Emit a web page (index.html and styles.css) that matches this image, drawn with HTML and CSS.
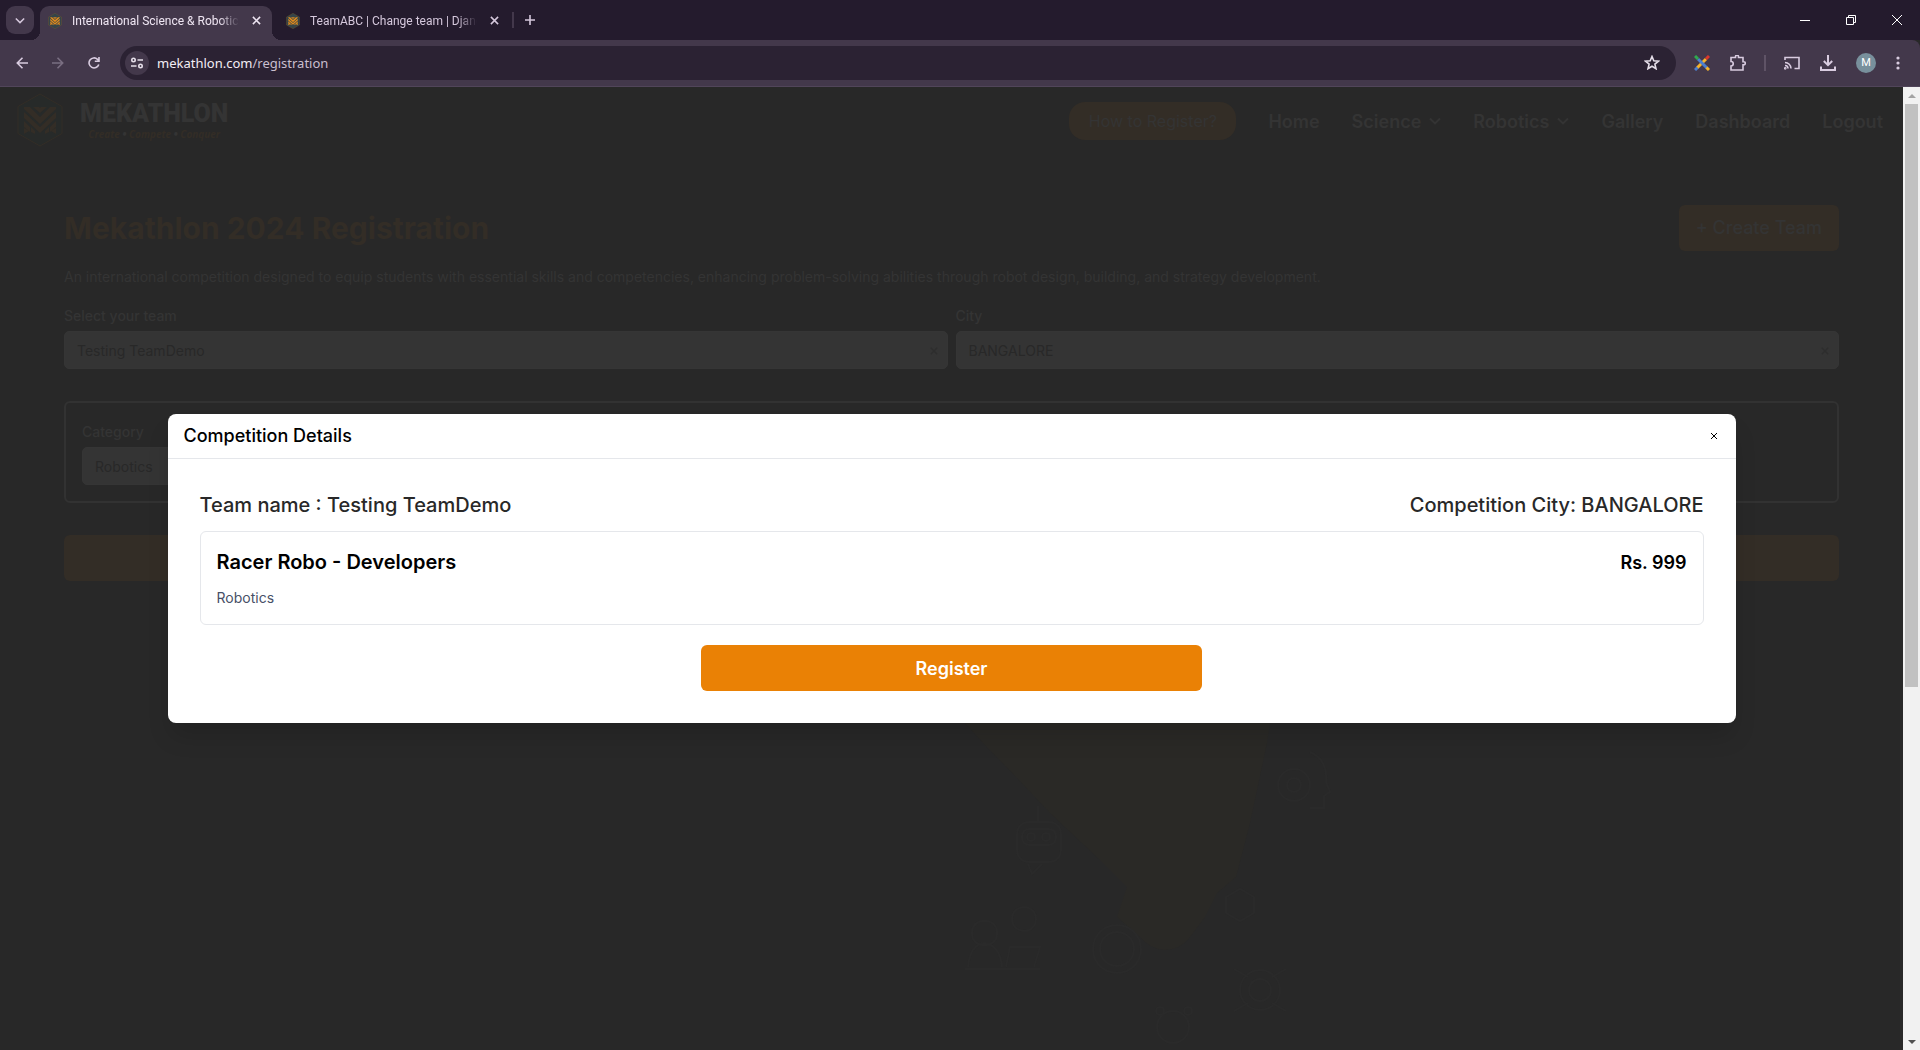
FILE: index.html
```html
<!DOCTYPE html>
<html lang="en">
<head>
    <meta charset="UTF-8">
    <meta name="viewport" content="width=device-width, initial-scale=1.0">
    <title>International Science &amp; Robotics Competition</title>
    <link rel="stylesheet" href="styles.css">
</head>
<body>

    <!-- shared shapes -->
    <svg class="defs" aria-hidden="true">
        <symbol id="logo" viewBox="0 0 46 54">
            <path class="hex" d="M23 1 45 13.500V40.500L23 53 1 40.500V13.500Z"/>
            <path class="mark" d="M7 14h6l10 10 10-10h6v2L23 31 7 16ZM16 14h6l1 1 1-1h6l-7 6ZM7 19l16 15 16-15v6L23 40 7 25ZM7 28l6 6v5l-6-5ZM39 28l-6 6v5l6-5ZM7 35l5 3-5 3ZM14 34l4 4v3l-4-2ZM39 35l-5 3 5 3ZM32 34l-4 4v3l4-2Z"/>
        </symbol>
        <symbol id="chevron" viewBox="0 0 12 8">
            <path d="M1 1.500 6 6.500 11 1.500" fill="none" stroke="currentColor" stroke-width="1.800"/>
        </symbol>
        <symbol id="cross" viewBox="0 0 10 10">
            <path d="M1 1l8 8M9 1 1 9" fill="none" stroke="currentColor" stroke-width="1.700"/>
        </symbol>
    </svg>

    <div class="tab-bar">
        <button class="tab-search" aria-label="Search tabs"><svg width="10" height="7"><use href="#chevron"/></svg></button>
        <div class="tab active">
            <svg class="favicon" width="14" height="16"><use href="#logo"/></svg>
            <span class="tab-title">International Science &amp; Robotic</span>
            <button class="tab-close" aria-label="Close tab"><svg width="9" height="9"><use href="#cross"/></svg></button>
        </div>
        <div class="tab">
            <svg class="favicon" width="14" height="16"><use href="#logo"/></svg>
            <span class="tab-title">TeamABC | Change team | Djang</span>
            <button class="tab-close" aria-label="Close tab"><svg width="9" height="9"><use href="#cross"/></svg></button>
        </div>
        <span class="tab-line"></span>
        <button class="new-tab" aria-label="New tab"><svg width="10" height="10" viewBox="0 0 10 10"><path d="M5 0v10M0 5h10" stroke="currentColor" stroke-width="1.600"/></svg></button>
        <div class="window-buttons">
            <button aria-label="Minimize"><svg width="10" height="10"><path d="M0 5.500h10" stroke="currentColor"/></svg></button>
            <button aria-label="Restore"><svg width="10" height="10" fill="none" stroke="currentColor"><path d="M.5 2.500h7v7h-7ZM2.500 2.500v-2h7v7h-2"/></svg></button>
            <button aria-label="Close"><svg width="10" height="10" stroke="currentColor"><path d="M0 0l10 10M10 0 0 10"/></svg></button>
        </div>
    </div>

    <div class="toolbar">
        <div class="nav-buttons">
            <button aria-label="Back"><svg width="12" height="12" viewBox="0 0 12 12"><path d="M12 6H1.500M6.500.8 1.300 6l5.200 5.200"/></svg></button>
            <button class="off" aria-label="Forward"><svg width="12" height="12" viewBox="0 0 12 12"><path d="M0 6h10.500M5.500.8 10.700 6l-5.200 5.200"/></svg></button>
            <button aria-label="Reload"><svg width="12" height="12" viewBox="0 0 12 12"><path d="M10.800 7.500A5 5 0 1 1 9.500 2.300L11 4M11 0v4.300H6.800"/></svg></button>
        </div>
        <div class="omnibox">
            <button class="site-info" aria-label="Site information"><svg width="12" height="12" viewBox="0 0 12 12"><circle cx="2.500" cy="3" r="1.700"/><path d="M6.500 3H12M0 9h5.500"/><circle cx="9.500" cy="9" r="1.700"/></svg></button>
            <a class="url" href="#">mekathlon.com<span>/registration</span></a>
            <button class="star" aria-label="Bookmark"><svg width="16" height="15" viewBox="0 0 16 15"><path d="M8 1.500l1.800 4.200 4.700.4-3.600 3 1.100 4.600L8 11.300l-4 2.400 1.100-4.600-3.600-3 4.700-.4Z"/></svg></button>
        </div>
        <div class="extensions">
            <button aria-label="Extension">
                <svg class="pens" width="16" height="16" viewBox="0 0 16 16">
                    <path stroke="#f5b32c" d="M12 4 3 13"/><path stroke="#4c7fd0" d="M4 4l9 9"/>
                    <path stroke="#2fa84f" d="M1 1l3 3"/><path stroke="#d9372c" d="M15 1l-3 3"/>
                    <path stroke="#4c7fd0" d="M3.500 12.500 1 15"/><path stroke="#f5b32c" d="M12.500 12.500 15 15"/>
                </svg>
            </button>
            <button aria-label="Extensions"><svg width="16" height="16" viewBox="0 0 16 16"><path d="M1 2.500h4.500V1.700a1.500 1.500 0 0 1 3 0v.8H13v4.300h.8a1.500 1.500 0 0 1 0 3H13V15H1v-4a2.200 2.200 0 0 0 0-4.500Z"/></svg></button>
            <span class="tool-line"></span>
            <button aria-label="Cast"><svg width="16" height="14" viewBox="0 0 16 14"><path d="M1 4V1.500h14v11h-4.500M1 6.500a6 6 0 0 1 6 6M1 9.500a3 3 0 0 1 3 3"/><circle cx="1.200" cy="12.300" r=".6"/></svg></button>
            <button aria-label="Downloads"><svg width="16" height="16" viewBox="0 0 16 16"><path class="thick" d="M8 0v10M3.800 6 8 10.200 12.200 6M1 11.500V15h14v-3.500"/></svg></button>
            <button class="avatar" aria-label="Profile">M</button>
            <button aria-label="Menu"><svg class="dots" width="4" height="14" viewBox="0 0 4 14"><circle cx="2" cy="2" r="1.600"/><circle cx="2" cy="7" r="1.600"/><circle cx="2" cy="12" r="1.600"/></svg></button>
        </div>
    </div>

    <div class="viewport">
        <div class="page">
            <!-- faint illustration behind the form -->
            <svg class="backdrop" viewBox="0 0 1903 963" preserveAspectRatio="xMidYMid slice" aria-hidden="true">
                <path class="beam" d="M965 636H1270L1267 656L1250 736L1236 790L1217 806L1205 830L1190 850Q1180 863 1165 863Q1150 862 1140 850L1117 830L1127 800L1100 773L1050 726L1017 691L983 656Z"/>
                <g class="doodles">
                    <rect x="1017" y="735" width="44" height="40" rx="12"/>
                    <rect x="1022" y="742" width="34" height="16" rx="7"/>
                    <circle cx="1031" cy="750" r="4"/><circle cx="1046" cy="750" r="4"/>
                    <path d="M1028 777l4 10 10-10M1038 735v-16M965 882h75M968 880q2-22 16-24 16 2 18 24M1006 880l4-20h30l-6 20"/>
                    <rect x="972" y="834" width="25" height="24" rx="11"/>
                    <circle cx="1024" cy="832" r="12"/>
                    <circle cx="1117" cy="862" r="24"/><circle cx="1117" cy="862" r="17"/>
                    <circle cx="1294" cy="698" r="16"/><circle cx="1294" cy="698" r="7"/>
                    <path d="M1310 665q18 8 16 30l4 10-6 4v12h-14M1226 810l14-8 14 8v16l-14 8-14-8Z"/>
                    <circle cx="1260" cy="903" r="11"/><circle cx="1260" cy="903" r="20"/>
                    <path d="M1234 882l14 8M1286 882l-14 8M1234 924l14-8M1286 924l-14-8"/>
                    <circle cx="1173" cy="940" r="16"/><circle cx="1160" cy="924" r="4"/><circle cx="1188" cy="924" r="4"/>
                </g>
            </svg>

            <header class="site-header">
                <a class="brand" href="#">
                    <svg class="brand-logo" width="46" height="54"><use href="#logo"/></svg>
                    <span class="brand-text">
                        <span class="brand-name">MEKATHLON</span>
                        <span class="tagline">Create <b>•</b> Compete <b>•</b> Conquer</span>
                    </span>
                </a>
                <nav class="menu">
                    <button class="how">How to Register?</button>
                    <a href="#">Home</a>
                    <a href="#">Science <svg width="12" height="8"><use href="#chevron"/></svg></a>
                    <a href="#">Robotics <svg width="12" height="8"><use href="#chevron"/></svg></a>
                    <a href="#">Gallery</a>
                    <a href="#">Dashboard</a>
                    <a href="#">Logout</a>
                </nav>
            </header>

            <main class="content">
                <div class="title-row">
                    <h1>Mekathlon 2024 Registration</h1>
                    <button class="create">+ Create Team</button>
                </div>
                <p class="intro">An international competition designed to equip students with essential skills and competencies, enhancing problem-solving abilities through robot design, building, and strategy development.</p>
                <div class="fields">
                    <div class="field">
                        <label for="team">Select your team</label>
                        <div class="select-box">
                            <select id="team"><option>Testing TeamDemo</option></select>
                            <button class="clear" aria-label="Clear team"><svg width="8" height="8"><use href="#cross"/></svg></button>
                        </div>
                    </div>
                    <div class="field">
                        <label for="city">City</label>
                        <div class="select-box">
                            <select id="city"><option>BANGALORE</option></select>
                            <button class="clear" aria-label="Clear city"><svg width="8" height="8"><use href="#cross"/></svg></button>
                        </div>
                    </div>
                </div>
                <div class="competition">
                    <div class="field">
                        <label for="category">Category</label>
                        <div class="select-box">
                            <select id="category"><option>Robotics</option></select>
                        </div>
                    </div>
                </div>
                <button class="submit" aria-label="Submit"></button>
            </main>

            <div class="overlay">
                <section class="modal" role="dialog" aria-labelledby="modal-title">
                    <div class="modal-header">
                        <h2 id="modal-title">Competition Details</h2>
                        <button class="modal-close" aria-label="Close"><svg width="8" height="8" viewBox="0 0 8 8"><path d="M1 1l6 6M7 1 1 7" stroke="currentColor"/></svg></button>
                    </div>
                    <div class="modal-body">
                        <div class="summary">
                            <span>Team name : Testing TeamDemo</span>
                            <span>Competition City: BANGALORE</span>
                        </div>
                        <div class="card">
                            <div class="card-row">
                                <h3>Racer Robo - Developers</h3>
                                <span class="price">Rs. 999</span>
                            </div>
                            <p>Robotics</p>
                        </div>
                        <button class="register">Register</button>
                    </div>
                </section>
            </div>
        </div>

        <div class="scrollbar" aria-hidden="true">
            <span class="arrow up"></span>
            <div class="track"><div class="thumb"></div></div>
            <span class="arrow down"></span>
        </div>
    </div>

</body>
</html>
```

FILE: styles.css
```css
* {
    box-sizing: border-box;
}

body {
    margin: 0;
    height: 100vh;
    display: flex;
    flex-direction: column;
    overflow: hidden;
    font-family: Inter, sans-serif;
    background: #282828;
}

button {
    padding: 0;
    border: none;
    background: none;
    color: inherit;
    font: inherit;
    cursor: pointer;
}

svg {
    display: block;
    flex: none;
}

a {
    color: inherit;
    text-decoration: none;
}

h1, h2, h3, p {
    margin: 0;
}

.defs {
    position: absolute;
    width: 0;
    height: 0;
}

.hex {
    fill: var(--hex);
    stroke: var(--hex-line);
}

.mark {
    fill: var(--mark);
}

/* tab bar */

.tab-bar {
    display: flex;
    align-items: center;
    height: 40px;
    background: #241b2d;
    color: #d5c8dc;
    font: 12px/16px Roboto, sans-serif;
}

.tab-search {
    width: 28px;
    height: 28px;
    margin: 0 6px;
    border-radius: 9px;
    background: #43384b;
    display: flex;
    align-items: center;
    justify-content: center;
}

.tab {
    display: flex;
    align-items: center;
    align-self: flex-end;
    width: 232px;
    height: 34px;
    padding: 0 11px 5px 8px;
    margin-right: 6px;
}

.tab.active {
    position: relative;
    background: #43384b;
    border-radius: 9px 9px 0 0;
    color: #efe6f3;
}

.tab.active::before, .tab.active::after {
    content: "";
    position: absolute;
    bottom: 0;
    width: 9px;
    height: 9px;
}

.tab.active::before {
    right: 100%;
    background: radial-gradient(circle at 0 0, transparent 9px, #43384b 9px);
}

.tab.active::after {
    left: 100%;
    background: radial-gradient(circle at 100% 0, transparent 9px, #43384b 9px);
}

.favicon {
    --hex: #344449;
    --hex-line: #8a6425;
    --mark: #e08a1c;
}

.tab-title {
    flex: 1;
    margin: 0 13px 0 10px;
    overflow: hidden;
    white-space: nowrap;
    -webkit-mask-image: linear-gradient(to right, #000 88%, transparent);
    mask-image: linear-gradient(to right, #000 88%, transparent);
}

.tab-line {
    width: 2px;
    height: 16px;
    margin-left: -4px;
    background: #43384b;
}

.new-tab {
    padding: 11px;
}

.window-buttons {
    margin-left: auto;
    display: flex;
    color: #fff;
}

.window-buttons button {
    width: 46px;
    height: 40px;
    display: flex;
    align-items: center;
    justify-content: center;
}

/* toolbar */

.toolbar {
    display: flex;
    align-items: center;
    height: 47px;
    padding-bottom: 1px;
    border-bottom: 1px solid #51455a;
    background: #43384b;
    color: #d9cce0;
    border-radius: 0 8px 0 0;
}

.toolbar svg {
    fill: none;
    stroke: currentColor;
    stroke-width: 1.6px;
}

.nav-buttons {
    display: flex;
    gap: 24px;
    padding: 0 20px 0 16px;
}

.nav-buttons .off {
    color: #7a6f82;
}

.omnibox {
    flex: 1;
    display: flex;
    align-items: center;
    height: 34px;
    padding: 0 16px 0 5px;
    border-radius: 17px;
    background: #2b2233;
    color: #e6dfea;
}

.site-info {
    width: 24px;
    height: 24px;
    border-radius: 12px;
    background: #43384b;
    display: flex;
    align-items: center;
    justify-content: center;
}

.url {
    flex: 1;
    margin-left: 8px;
    color: #f3eef5;
    font: 13px/20px "Noto Sans", sans-serif;
}

.url span {
    color: #c9bfce;
}

.extensions {
    display: flex;
    align-items: center;
    gap: 20px;
    padding: 0 20px 0 18px;
}

.toolbar .pens {
    stroke-width: 3px;
}

.toolbar .thick {
    stroke-width: 2px;
}

.toolbar .dots {
    fill: currentColor;
    stroke: none;
}

.tool-line {
    width: 2px;
    height: 16px;
    margin: 0 -2px;
    background: #5f5366;
}

.avatar {
    width: 20px;
    height: 20px;
    border-radius: 10px;
    background: #78909c;
    color: #fff;
    font: 11px/20px Roboto, sans-serif;
}

/* page behind the dialog */

.viewport {
    flex: 1;
    display: flex;
    min-height: 0;
}

.page {
    flex: 1;
    position: relative;
    overflow: hidden;
    color: #343434;
}

.backdrop {
    position: absolute;
    top: 0;
    left: 0;
    width: 100%;
    height: 100%;
}

.beam {
    fill: #2a2926;
}

.doodles {
    fill: none;
    stroke: #2a2a2a;
    stroke-width: 2;
}

.site-header {
    position: relative;
    display: flex;
    justify-content: space-between;
    align-items: flex-start;
    padding: 6px 20px 0 17px;
}

.brand {
    display: flex;
    gap: 17px;
}

.brand-logo {
    --hex: #272a29;
    --hex-line: #332d26;
    --mark: #332d26;
}

.brand-text {
    display: flex;
    flex-direction: column;
    align-items: center;
    padding-top: 7px;
}

.brand-name {
    font: 900 25px/28px Roboto, sans-serif;
}

.tagline {
    color: #332d26;
    font: italic bold 10px/12px "Open Sans", sans-serif;
}

.tagline b {
    color: #343434;
}

.menu {
    display: flex;
    align-items: center;
    gap: 32px;
    height: 56px;
    font-size: 18px;
    font-weight: 600;
}

.menu a {
    display: flex;
    align-items: center;
    gap: 8px;
}

.how {
    width: 167px;
    height: 38px;
    border-radius: 16px;
    background: #332d26;
    font-size: 16px;
    font-weight: 400;
}

.content {
    position: relative;
    display: flex;
    flex-direction: column;
    padding: 56px 64px 0;
    font-size: 14px;
    line-height: 20px;
}

.title-row {
    display: flex;
    justify-content: space-between;
    align-items: center;
}

h1 {
    color: #332d26;
    font-size: 30px;
    line-height: 36px;
    font-weight: 700;
}

.create {
    height: 46px;
    padding: 0 17px;
    border-radius: 6px;
    background: #332d26;
    font-size: 18px;
    font-weight: 500;
}

.intro {
    margin: 16px 0;
}

.fields {
    display: grid;
    grid-template-columns: 1fr 1fr;
    gap: 8px;
    padding-top: 3px;
}

.field label {
    display: block;
    margin-bottom: 5px;
    font-weight: 500;
}

.select-box {
    position: relative;
}

select {
    appearance: none;
    display: block;
    width: 100%;
    height: 38px;
    padding: 0 12px;
    border: 1px solid #353535;
    border-radius: 5px;
    background: #343434;
    color: #282828;
    font: 14px Inter, sans-serif;
}

.clear {
    position: absolute;
    top: 16px;
    right: 10px;
    color: #2d2d2d;
}

.competition {
    display: grid;
    grid-template-columns: 1fr 1fr 1fr;
    margin: 32px 0;
    padding: 19px 16px 16px;
    border: 2px solid #323232;
    border-radius: 6px;
}

.submit {
    height: 46px;
    border-radius: 6px;
    background: #332d26;
}

/* dialog */

.overlay {
    position: absolute;
    top: 0;
    right: 0;
    bottom: 0;
    left: 0;
    display: flex;
    align-items: center;
    justify-content: center;
}

.modal {
    width: 100%;
    max-width: 1568px;
    border-radius: 8px;
    background: #fff;
    color: #000;
    box-shadow: 0 16px 24px -4px rgba(0, 0, 0, 0.15);
}

.modal-header {
    display: flex;
    justify-content: space-between;
    align-items: center;
    height: 45px;
    padding: 0 18px 0 16px;
    border-bottom: 1px solid #e5e7eb;
}

h2 {
    font-size: 18px;
    line-height: 28px;
    font-weight: 500;
}

.modal-body {
    display: flex;
    flex-direction: column;
    padding: 32px;
}

.summary {
    display: flex;
    justify-content: space-between;
    margin-bottom: 12px;
    color: #282828;
    font-size: 20px;
    line-height: 28px;
    font-weight: 500;
}

.card {
    padding: 16px;
    border: 1px solid #e5e7eb;
    border-radius: 6px;
}

.card-row {
    display: flex;
    justify-content: space-between;
    align-items: center;
    margin-bottom: 12px;
}

h3 {
    font-size: 20px;
    line-height: 28px;
    font-weight: 600;
}

.price {
    font-size: 18px;
    font-weight: 600;
}

.card p {
    color: #475067;
    font-size: 14px;
    line-height: 20px;
}

.register {
    width: 33.33%;
    height: 46px;
    margin: 20px auto 0;
    border-radius: 6px;
    background: #ea8105;
    color: #fff;
    font-size: 18px;
    font-weight: 600;
}

/* scrollbar */

.scrollbar {
    width: 17px;
    display: flex;
    flex-direction: column;
    background: #f1f1f1;
}

.arrow {
    height: 17px;
    display: flex;
    align-items: center;
    justify-content: center;
}

.arrow::before {
    content: "";
    border: 4px solid transparent;
}

.up::before {
    border-top: none;
    border-bottom-color: #a3a3a3;
}

.down::before {
    border-bottom: none;
    border-top-color: #505050;
}

.track {
    flex: 1;
    padding: 0 2px;
}

.thumb {
    height: 62.8%;
    background: #c1c1c1;
}
```
